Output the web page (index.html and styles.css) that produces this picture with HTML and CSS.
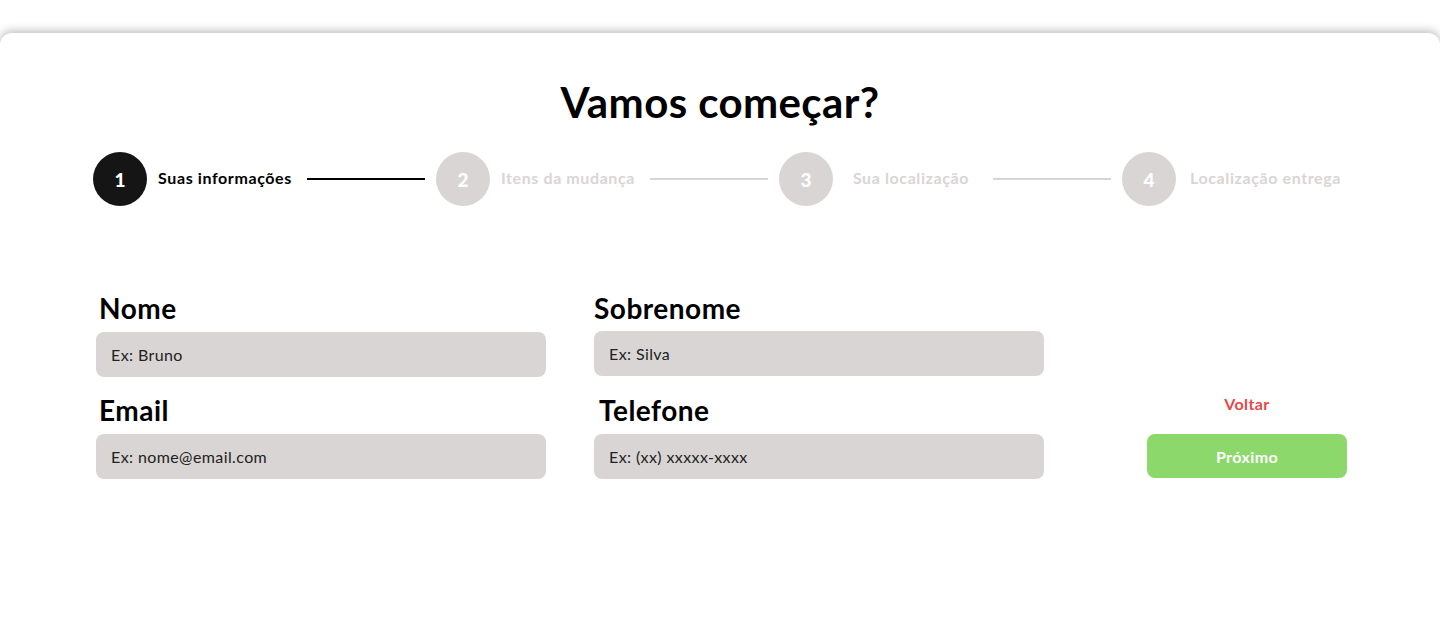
FILE: index.html
```html
<!DOCTYPE html>
<html lang="pt-BR">
<head>
<meta charset="utf-8">
<title>Vamos começar?</title>
<link rel="stylesheet" href="styles.css">
</head>
<body>
<main class="card">
  <h1 class="title">Vamos começar?</h1>
  <ol class="stepper">
    <li class="step active">
      <span class="circle">1</span>
      <span class="step-label">Suas informações</span>
      <span class="line"></span>
    </li>
    <li class="step">
      <span class="circle">2</span>
      <span class="step-label">Itens da mudança</span>
      <span class="line"></span>
    </li>
    <li class="step">
      <span class="circle">3</span>
      <span class="step-label">Sua localização</span>
      <span class="line"></span>
    </li>
    <li class="step last">
      <span class="circle">4</span>
      <span class="step-label">Localização entrega</span>
    </li>
  </ol>
  <form class="form">
    <label class="field-label c1 r1" for="nome">Nome</label>
    <input class="field c1 r2" id="nome" type="text" placeholder="Ex: Bruno">
    <label class="field-label c2 r1 flush" for="sobrenome">Sobrenome</label>
    <input class="field c2 r2 up" id="sobrenome" type="text" placeholder="Ex: Silva">
    <label class="field-label c1 r3" for="email">Email</label>
    <input class="field c1 r4" id="email" type="text" placeholder="Ex: nome@email.com">
    <label class="field-label c2 r3 shift" for="tel">Telefone</label>
    <input class="field c2 r4" id="tel" type="text" placeholder="Ex: (xx) xxxxx-xxxx">
    <a class="back c3 r3" href="#">Voltar</a>
    <button class="next c3 r4" type="button">Próximo</button>
  </form>
</main>
</body>
</html>
```

FILE: styles.css
```css
* { box-sizing: border-box; }
html, body { margin: 0; padding: 0; background: #fff; }
body {
  font-family: Lato, "Open Sans", sans-serif;
  color: #000;
  overflow: hidden;
  height: 620px;
}
.card {
  margin-top: 33px;
  background: #fff;
  border-radius: 12px 12px 0 0;
  box-shadow: 0 -2px 10px rgba(0, 0, 0, 0.28);
  height: 600px;
  padding: 45px 0 0 93px;
}
.title {
  margin: 0 0 0 -93px;
  text-align: center;
  font-size: 42px;
  line-height: 48px;
  letter-spacing: 0.4px;
  font-weight: 700;
}
.stepper {
  list-style: none;
  margin: 26px 0 0 0;
  padding: 0;
  display: flex;
  height: 54px;
}
.step {
  display: flex;
  align-items: center;
  width: 343px;
  flex: none;
}
.circle {
  width: 54px;
  height: 54px;
  border-radius: 50%;
  background: #d9d5d4;
  color: #fff;
  font-weight: 900;
  font-size: 19px;
  display: flex;
  align-items: center;
  justify-content: center;
  flex: none;
}
.step-label {
  width: 152px;
  margin-left: 2px;
  padding-bottom: 3px;
  text-align: center;
  font-size: 16px;
  letter-spacing: 0.6px;
  font-weight: 700;
  color: #d9d5d4;
  white-space: nowrap;
  flex: none;
}
.line {
  width: 118px;
  height: 2px;
  margin-left: 6px;
  background: #d9d5d4;
  flex: none;
}
.step.active .circle { background: #151515; }
.step.active .step-label { color: #000; }
.step.active .line { background: #000; }
.step.last .step-label { width: auto; text-align: left; margin-left: 14px; }

.form {
  margin: 86px 0 0 3px;
  display: grid;
  grid-template-columns: 450px 450px 200px;
  grid-template-rows: 32px 53px 49px 53px;
  column-gap: 48px;
}
.c1 { grid-column: 1; }
.c2 { grid-column: 2; }
.c3 { grid-column: 3; margin-left: 55px; }
.r1 { grid-row: 1; }
.r2 { grid-row: 2; margin-top: 8px; }
.r3 { grid-row: 3; margin-top: 17px; }
.r4 { grid-row: 4; margin-top: 8px; }

.field-label {
  font-size: 28px;
  line-height: 32px;
  letter-spacing: 0.5px;
  font-weight: 700;
  padding-left: 3px;
}
.field-label.flush { padding-left: 0; }
.field-label.shift { padding-left: 5px; }
.field {
  width: 450px;
  height: 45px;
  align-self: start;
  border: none;
  outline: none;
  background: #d9d5d4;
  border-radius: 8px;
  padding: 0 15px;
  font-family: inherit;
  font-size: 16px;
  letter-spacing: 0.4px;
  color: #222;
}
.field.up { margin-top: 7px; }
.field::placeholder { color: #222; opacity: 1; }

.back {
  color: #e84848;
  font-size: 16px;
  letter-spacing: 0.4px;
  font-weight: 700;
  text-decoration: none;
  text-align: center;
  width: 200px;
  line-height: 20px;
  align-self: start;
}
.r3.back { margin-top: 17px; }
.next {
  width: 200px;
  height: 44px;
  align-self: start;
  border: none;
  border-radius: 8px;
  background: #8cd86a;
  color: #fff;
  font-family: inherit;
  font-size: 16px;
  letter-spacing: 0.4px;
  font-weight: 700;
}
```
